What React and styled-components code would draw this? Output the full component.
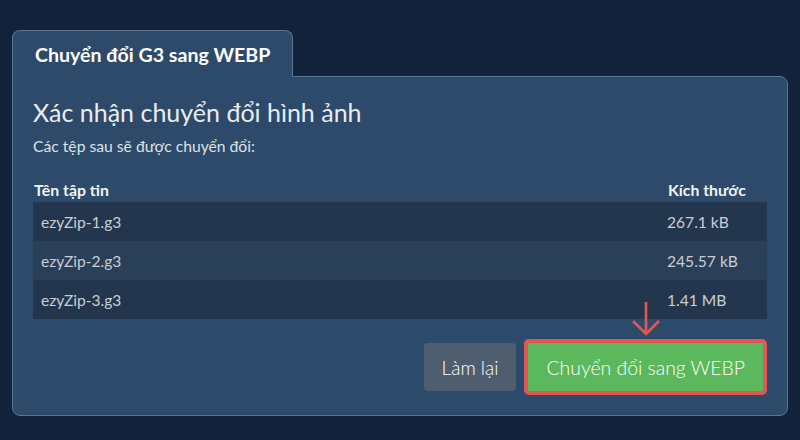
import React from 'react'
import styled, { createGlobalStyle } from 'styled-components'

const GlobalStyle = createGlobalStyle`
  html, body {
    margin: 0;
    padding: 0;
    background: #11223a;
  }
  body {
    font-family: Lato, "Open Sans", "Liberation Sans", sans-serif;
    color: #e8ecf0;
  }
`

const files = [
  { name: 'ezyZip-1.g3', size: '267.1 kB' },
  { name: 'ezyZip-2.g3', size: '245.57 kB' },
  { name: 'ezyZip-3.g3', size: '1.41 MB' }
]

const Page = styled.div`
  width: 800px;
  height: 440px;
  box-sizing: border-box;
  padding: 30px 12px 0 12px;
`

const TabBar = styled.div`
  display: flex;
`

const Tab = styled.div`
  position: relative;
  z-index: 1;
  height: 47px;
  box-sizing: border-box;
  margin-bottom: -1px;
  padding: 0 22px;
  display: flex;
  align-items: center;
  background: #2d4a6a;
  border: 1px solid #5a7593;
  border-bottom: none;
  border-radius: 8px 8px 0 0;
  font-size: 19.6px;
  font-weight: 700;
  color: #ffffff;
`

const Panel = styled.div`
  background: #2d4a6a;
  border: 1px solid #5a7593;
  border-radius: 0 8px 8px 8px;
  padding: 20px 20px 20px 20px;
`

const Heading = styled.h2`
  margin: 0 0 9px 0;
  font-size: 25px;
  font-weight: 400;
  line-height: 1.2;
  color: #e9edf1;
`

const Note = styled.p`
  margin: 0 0 22px 0;
  font-size: 15.7px;
  line-height: 21px;
  color: #dde2e7;
`

const Table = styled.div`
  display: grid;
  grid-template-columns: 1fr 100px;
`

const HeadCell = styled.div`
  padding: 0 0 2px 1px;
  font-size: 15.8px;
  font-weight: 700;
  line-height: 21px;
  color: #f1f4f7;
`

const Cell = styled.div`
  height: 39px;
  display: flex;
  align-items: center;
  padding-left: ${p => (p.$first ? '8px' : '0')};
  background: ${p => (p.$odd ? '#2a3f58' : '#24364d')};
  font-size: 15.6px;
  color: #c9ced5;
`

const Actions = styled.div`
  margin-top: 20px;
  display: flex;
  justify-content: flex-end;
  align-items: center;
  gap: 8px;
`

const Button = styled.button`
  height: 48px;
  padding: 0 18px;
  border: none;
  border-radius: 4px;
  background: #4e5e6f;
  color: #ffffff;
  font-family: inherit;
  font-size: 19px;
  font-weight: 300;
  cursor: pointer;
`

const Highlight = styled.div`
  position: relative;
`

const PrimaryButton = styled(Button)`
  height: 56px;
  padding: 0 18px;
  border: 4px solid #e05753;
  border-radius: 5px;
  background: #5cb85c;
  font-size: 19.4px;
`

const Arrow = styled.svg`
  position: absolute;
  left: 50%;
  bottom: calc(100% + 2px);
  transform: translateX(-50%);
`

export default function App() {
  return (
    <Page>
      <GlobalStyle />
      <TabBar>
        <Tab>Chuyển đổi G3 sang WEBP</Tab>
      </TabBar>
      <Panel>
        <Heading>Xác nhận chuyển đổi hình ảnh</Heading>
        <Note>Các tệp sau sẽ được chuyển đổi:</Note>
        <Table>
          <HeadCell>Tên tập tin</HeadCell>
          <HeadCell>Kích thước</HeadCell>
          {files.map((f, i) => (
            <React.Fragment key={f.name}>
              <Cell $first $odd={i % 2 === 1}>{f.name}</Cell>
              <Cell $odd={i % 2 === 1}>{f.size}</Cell>
            </React.Fragment>
          ))}
        </Table>
        <Actions>
          <Button>Làm lại</Button>
          <Highlight>
            <Arrow width="30" height="36" viewBox="0 0 30 36" fill="none">
              <path d="M15 1 V33 M2 20 L15 33 L28 20" stroke="#e05753" strokeWidth="2.6" />
            </Arrow>
            <PrimaryButton>Chuyển đổi sang WEBP</PrimaryButton>
          </Highlight>
        </Actions>
      </Panel>
    </Page>
  )
}
